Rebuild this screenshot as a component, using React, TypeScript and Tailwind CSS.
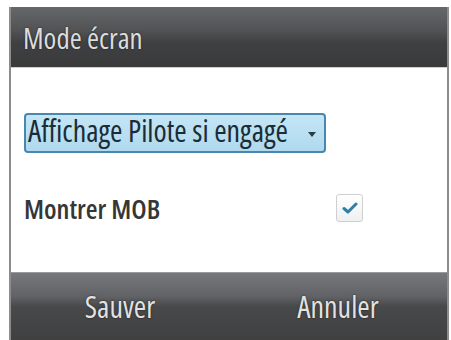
import React from 'react';

const CheckMark: React.FC = () => (
  <svg width="16" height="12" viewBox="0 0 16 12" fill="none">
    <path d="M2 6.5 L6 10 L14 2" stroke="#2f7ea6" strokeWidth="3" strokeLinecap="round" strokeLinejoin="round" />
  </svg>
);

export default function App() {
  return (
    <div className="w-[451px] h-[340px] bg-white pl-[9px] pt-[7px] overflow-hidden font-['Open_Sans',sans-serif] font-stretch-semi-condensed">
      <div className="w-[440px] h-[333px] flex flex-col border-x-2 border-[#8c8c8c]">
        {/* Title bar */}
        <div className="h-[61px] shrink-0 flex items-center pl-[12px] bg-[linear-gradient(#65686a,#505254_40%,#3f4042_60%,#3a3a3b)] border-b border-[#cfcfcf]">
          <span className="text-[29px] font-medium text-[#dcdcdc] [text-shadow:0_0_2px_rgba(0,0,0,0.6)] leading-none">Mode écran</span>
        </div>

        {/* Body */}
        <div className="flex-1 bg-white flex flex-col pl-[13px] pr-[84px]">
          <div className="mt-[45px] w-[302px] h-[40px] flex items-center justify-between pl-[2px] pr-[8px] pb-[4px] rounded-[4px] border-2 border-[#4887b0] bg-[linear-gradient(#c4e6f6,#b0d9ee)]">
            <span className="text-[30px] font-medium whitespace-nowrap text-[#1b2c36] leading-none">Affichage Pilote si engagé</span>
            <svg width="8" height="5" viewBox="0 0 8 5" className="mt-[6px] shrink-0">
              <path d="M0 0 H8 L4 5 Z" fill="#2a3a44" />
            </svg>
          </div>

          <div className="mt-[41px] flex items-center justify-between">
            <span className="text-[27px] font-semibold text-[#363636] leading-none">Montrer MOB</span>
            <div className="w-[27px] h-[28px] rounded-[3px] border border-[#cfcfcf] bg-[linear-gradient(#ffffff,#eef0f1)] flex items-center justify-center">
              <CheckMark />
            </div>
          </div>
        </div>

        {/* Button bar */}
        <div className="h-[68px] shrink-0 flex border-t border-[#9a9a9a] bg-[linear-gradient(#76787b,#606265_35%,#48494a_50%,#404041)]">
          <button className="flex-1 flex items-center justify-center text-[30px] font-medium leading-none text-[#e2e2e2] [text-shadow:0_0_2px_rgba(0,0,0,0.7)]">
            Sauver
          </button>
          <button className="flex-1 flex items-center justify-center text-[30px] font-medium leading-none text-[#e2e2e2] [text-shadow:0_0_2px_rgba(0,0,0,0.7)]">
            Annuler
          </button>
        </div>
      </div>
    </div>
  );
}
